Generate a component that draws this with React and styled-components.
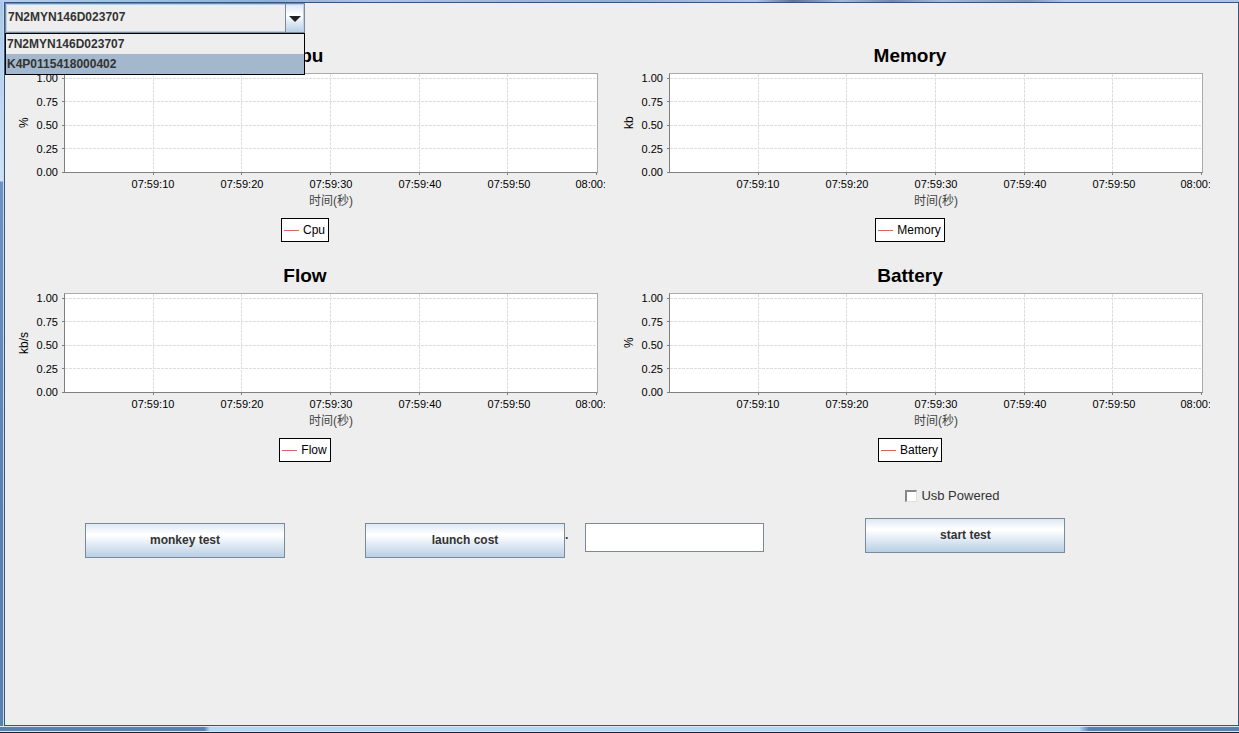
import React, { useState } from "react";
import styled, { createGlobalStyle } from "styled-components";

const GlobalStyle = createGlobalStyle`
  *, *::before, *::after { box-sizing: border-box; }
  body {
    margin: 0;
    font: 12px/14px "Liberation Sans", "Noto Sans CJK SC", sans-serif;
    color: #000;
  }
`;

const Desktop = styled.div`
  min-height: 100vh;
  display: flex;
  padding: 2px 0 4px 4px;
  border-bottom: 1px solid #14203c;
  background:
    linear-gradient(#d6e8f8, #d6e8f8) left bottom / 100% 1px no-repeat,
    linear-gradient(to right, #5a80b2 204px, #b4d8f4 210px, #b4d8f4 calc(100% - 160px), #5a80b2 calc(100% - 150px)) left bottom / 100% 5px no-repeat,
    linear-gradient(#d6e8f8, #d6e8f8) left bottom / 100% 6px no-repeat,
    linear-gradient(to right, #b4cdea, #8fb0d4 22%, #a9c5e2 30%, #8fb0d4 50%, #a9c5e2 61%, #5d7590 64%, #9dbcdc 68%, #6f8cab 72%, #9dbcdc 76%, #7c9aba 83%, #a9c5e2 86%) left top / 100% 2px no-repeat,
    linear-gradient(#c4d9f0, #c4d9f0) 3px top / 1px 100% no-repeat,
    linear-gradient(to bottom, #a9c8ea, #cfe2f4 181px, #6f92c4 182px, #5a80b2 70%) left top / 4px 100% no-repeat;
`;

const Window = styled.main`
  flex: 1;
  min-width: 0;
  position: relative;
  margin-bottom: 2px;
  border: 1px solid #35547e;
  background: #eee;
`;

const ComboBox = styled.div`
  position: relative;
  width: 300px;
  z-index: 1;
`;

const ComboSelect = styled.select`
  display: block;
  appearance: none;
  width: 100%;
  height: 30px;
  padding: 0 24px 2px 2px;
  border: 1px solid #7a8a99;
  border-radius: 0;
  outline: 1px solid #b8cfe5;
  outline-offset: -2px;
  background: linear-gradient(#dde8f3, #fff 40%, #b8cfe5) right top / 19px 100% no-repeat #eee;
  color: #333;
  font: bold 12px/14px "Liberation Sans", sans-serif;
`;

const ComboArrow = styled.svg`
  position: absolute;
  top: 1px;
  right: 1px;
  width: 19px;
  height: 28px;
  border-left: 1px solid #7a8a99;
  pointer-events: none;
`;

const Popup = styled.ul`
  position: absolute;
  top: 100%;
  left: 0;
  width: 100%;
  margin: 0;
  padding: 0;
  list-style: none;
  border: 1px solid #000;
  background: #eee;
`;

const PopupItem = styled.li`
  height: 20px;
  padding-left: 1px;
  background: ${(p) => (p.$active ? "#a3b8cc" : "transparent")};
  color: #333;
  font-weight: bold;
  line-height: 20px;
  cursor: default;
`;

const Charts = styled.section`
  display: grid;
  grid-template-columns: 1fr 1fr;
  column-gap: 5px;
  padding: 10px 28px 0 0;
`;

const ChartPanel = styled.figure`
  margin: 0;
  height: 220px;
  overflow: hidden;
`;

const ChartTitle = styled.h2`
  margin: 0 0 3px;
  text-align: center;
  font-size: 19px;
  line-height: 26px;
`;

const PlotGrid = styled.div`
  display: grid;
  grid-template-columns: 14px 33px 1fr;
  padding: 0 7px 0 12px;
`;

const RangeTitle = styled.div`
  writing-mode: vertical-rl;
  transform: rotate(180deg);
  text-align: center;
  padding-top: 4px;
`;

const RangeLabels = styled.div`
  display: flex;
  flex-direction: column;
  justify-content: space-between;
  height: 106px;
  padding-right: 6px;
  text-align: right;
  font-size: 11px;
  line-height: 12px;
`;

const PlotBox = styled.div`
  height: 100px;
  margin-top: 1px;
  border: 1px solid #aaa;
  border-left-color: #808080;
  border-bottom-color: #808080;
  background: #fff;
`;

const PlotSvg = styled.svg`
  display: block;
  width: 100%;
  height: 98px;
  overflow: visible;
`;

const DomainLabels = styled.div`
  grid-column: 3;
  display: grid;
  grid-template-columns: 1fr repeat(5, 2fr) 1fr;
  text-align: center;
  font-size: 11px;
  line-height: 12px;

  & > :first-child { grid-column-start: 2; }
  & > :last-child { justify-self: end; margin-right: -8px; }
`;

const DomainTitle = styled.div`
  grid-column: 3;
  margin-top: 4px;
  text-align: center;
  line-height: 14px;
  color: #444;
`;

const Legend = styled.figcaption`
  display: flex;
  align-items: center;
  gap: 4px;
  width: fit-content;
  height: 24px;
  margin: 10px auto 0;
  padding: 0 3px 0 2px;
  border: 1px solid #000;
  background: #fff;
`;

const LegendLine = styled.span`
  width: 15px;
  height: 1px;
  background: #d86464;
`;

const Controls = styled.form`
  display: flex;
  align-items: flex-start;
  justify-content: space-between;
  padding: 5px 14% 0 80px;
`;

const TestGroup = styled.div`
  display: flex;
  padding-top: 35px;
`;

const StartGroup = styled.div`
  display: flex;
  flex-direction: column;
  gap: 15px;
`;

const MetalButton = styled.button`
  width: 200px;
  height: 35px;
  padding: 0 0 2px;
  border: 1px solid #7a8a99;
  background: linear-gradient(#dde8f3, #fff 30%, #fff 34%, #b8cfe5);
  color: #333;
  font: bold 12px/14px "Liberation Sans", sans-serif;

  & + & { margin-left: 80px; }
`;

const CostLabel = styled.label`
  width: 20px;
  padding-top: 5px;
  color: #333;
  font-weight: bold;
`;

const CostInput = styled.input`
  width: 179px;
  height: 29px;
  border: 1px solid #7a8a99;
  background: #fff;
`;

const PoweredLabel = styled.label`
  display: flex;
  align-items: center;
  gap: 4px;
  height: 15px;
  padding-left: 40px;
  color: #333;
  font-size: 13px;
`;

const PoweredCheck = styled.input`
  appearance: none;
  width: 12px;
  height: 12px;
  margin: 0;
  border: 1px solid #e0e0e0;
  border-top: 2px solid #888;
  border-left: 2px solid #888;
  background: #fff;

  &:checked { background: #7a8a99; }
`;

const DEVICES = ["7N2MYN146D023707", "K4P0115418000402"];
const CHARTS = [
  { name: "Cpu", unit: "%" },
  { name: "Memory", unit: "kb" },
  { name: "Flow", unit: "kb/s" },
  { name: "Battery", unit: "%" },
];
const RANGE = ["1.00", "0.75", "0.50", "0.25", "0.00"];
const TIMES = ["07:59:10", "07:59:20", "07:59:30", "07:59:40", "07:59:50", "08:00:"];
const RANGE_Y = [4.5, 27.5, 51.5, 74.5, 98.5];

function Plot() {
  return (
    <PlotBox>
      <PlotSvg aria-hidden="true" shapeRendering="crispEdges">
        <g stroke="#dedede" strokeDasharray="3 1">
          {RANGE_Y.slice(0, 4).map((y) => (
            <line key={y} x1="0" x2="100%" y1={y} y2={y} />
          ))}
          <g transform="translate(-0.6 0)">
            {[1, 2, 3, 4, 5].map((k) => (
              <line key={k} x1={`${(k * 100) / 6}%`} x2={`${(k * 100) / 6}%`} y1="0" y2="98" />
            ))}
          </g>
        </g>
        <g stroke="#808080">
          {RANGE_Y.map((y) => (
            <line key={y} x1="-3" x2="-1" y1={y} y2={y} />
          ))}
          <g transform="translate(-0.6 0)">
            {[1, 2, 3, 4, 5, 6].map((k) => (
              <line key={k} x1={`${(k * 100) / 6}%`} x2={`${(k * 100) / 6}%`} y1="99" y2="101" />
            ))}
          </g>
        </g>
      </PlotSvg>
    </PlotBox>
  );
}

function Chart({ name, unit }) {
  return (
    <ChartPanel>
      <ChartTitle>{name}</ChartTitle>
      <PlotGrid>
        <RangeTitle>{unit}</RangeTitle>
        <RangeLabels>
          {RANGE.map((r) => <span key={r}>{r}</span>)}
        </RangeLabels>
        <Plot />
        <DomainLabels>
          {TIMES.map((t) => <span key={t}>{t}</span>)}
        </DomainLabels>
        <DomainTitle>时间(秒)</DomainTitle>
      </PlotGrid>
      <Legend><LegendLine />{name}</Legend>
    </ChartPanel>
  );
}

export default function App() {
  const [device, setDevice] = useState(DEVICES[0]);
  const [active, setActive] = useState(DEVICES[1]);
  return (
    <>
      <GlobalStyle />
      <Desktop>
        <Window>
          <ComboBox>
            <ComboSelect aria-label="Device" value={device} onChange={(e) => setDevice(e.target.value)}>
              {DEVICES.map((d) => <option key={d}>{d}</option>)}
            </ComboSelect>
            <ComboArrow viewBox="0 0 18 28" aria-hidden="true">
              <path d="M3 12h12l-6 6z" fill="#222" />
            </ComboArrow>
            <Popup role="listbox" aria-label="Devices">
              {DEVICES.map((d) => (
                <PopupItem
                  key={d}
                  role="option"
                  aria-selected={d === active}
                  $active={d === active}
                  onMouseEnter={() => setActive(d)}
                  onClick={() => setDevice(d)}
                >
                  {d}
                </PopupItem>
              ))}
            </Popup>
          </ComboBox>
          <Charts>
            {CHARTS.map((c) => <Chart key={c.name} {...c} />)}
          </Charts>
          <Controls onSubmit={(e) => e.preventDefault()}>
            <TestGroup>
              <MetalButton type="button">monkey test</MetalButton>
              <MetalButton type="button">launch cost</MetalButton>
              <CostLabel htmlFor="cost">.</CostLabel>
              <CostInput id="cost" type="text" />
            </TestGroup>
            <StartGroup>
              <PoweredLabel>
                <PoweredCheck type="checkbox" />
                Usb Powered
              </PoweredLabel>
              <MetalButton type="button">start test</MetalButton>
            </StartGroup>
          </Controls>
        </Window>
      </Desktop>
    </>
  );
}
